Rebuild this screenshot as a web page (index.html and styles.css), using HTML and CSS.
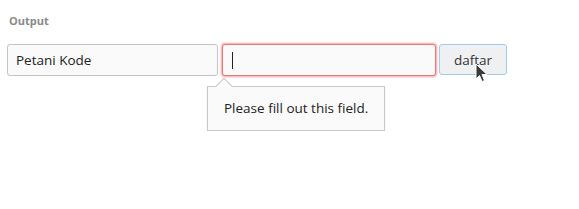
FILE: index.html
```html
<!doctype html>
<html lang="id">
<head>
    <meta charset="utf-8">
    <title>Output</title>
    <link rel="stylesheet" href="styles.css">
</head>
<body>
<!-- Hasil output -->
<div class="output">
    <h6 class="output-title">Output</h6>

    <form class="form-daftar">
        <input type="text" class="field" value="Petani Kode">
        <div class="field field-invalid"><span class="caret"></span></div>
        <div class="btn-wrap">
            <button type="button" class="btn-daftar">daftar</button>
            <svg class="cursor" width="14" height="20" viewBox="0 0 14 20">
                <path d="M1 1 L1 16 L4.5 12.5 L7 18.5 L9.5 17.5 L7 11.5 L12 11.5 Z" fill="#3a3a3a" stroke="#fff" stroke-width="1"/>
            </svg>
        </div>
    </form>

    <div class="pesan-validasi">Please fill out this field.</div>
</div>
</body>
</html>
```

FILE: styles.css
```css
/* Halaman output form */
body {
    margin: 8px 8px 8px 7px;
    background: #fff;
    font-family: "Open Sans", "Liberation Sans", sans-serif;
    color: #333;
}

.output-title {
    margin: 6px 0 0 2px;
    font-size: 11px;
    font-weight: bold;
    color: #8a8a8a;
    line-height: 14px;
}

.form-daftar {
    display: flex;
    align-items: flex-start;
    gap: 4px;
    margin-top: 16px;
}

.field {
    box-sizing: border-box;
    width: 211px;
    height: 32px;
    padding: 0 8px;
    border: 1px solid #c4c4c4;
    border-radius: 3px;
    background: #fafafa;
    font-family: inherit;
    font-size: 13.5px;
    color: #222;
    outline: none;
}

.field-invalid {
    width: 214px;
    border: 1px solid #e77;
    box-shadow: 0 0 2px 1px #f8a0a0;
    display: flex;
    align-items: center;
}

.caret {
    display: block;
    width: 1px;
    height: 17px;
    background: #222;
    margin-left: 1px;
}

.btn-wrap {
    position: relative;
    margin-left: -1px;
}

.btn-daftar {
    box-sizing: border-box;
    width: 68px;
    height: 31px;
    border: 1px solid #9fcdea;
    border-radius: 3px;
    background: #eff0f1;
    font-family: inherit;
    font-size: 13.5px;
    color: #333;
    padding: 0;
}

.cursor {
    position: absolute;
    left: 36px;
    top: 19px;
}

/* Pesan validasi browser */
.pesan-validasi {
    position: relative;
    display: inline-block;
    margin: 10px 0 0 200px;
    padding: 12px 16px 13px;
    background: #fafafa;
    border: 1px solid #c8c8c8;
    box-shadow: 0 1px 2px rgba(0, 0, 0, 0.08);
    font-size: 13.5px;
    color: #222;
    white-space: nowrap;
}

.pesan-validasi::before {
    content: "";
    position: absolute;
    left: 10px;
    top: -7px;
    width: 11px;
    height: 11px;
    background: #fafafa;
    border-left: 1px solid #c8c8c8;
    border-top: 1px solid #c8c8c8;
    transform: rotate(45deg);
}
```
